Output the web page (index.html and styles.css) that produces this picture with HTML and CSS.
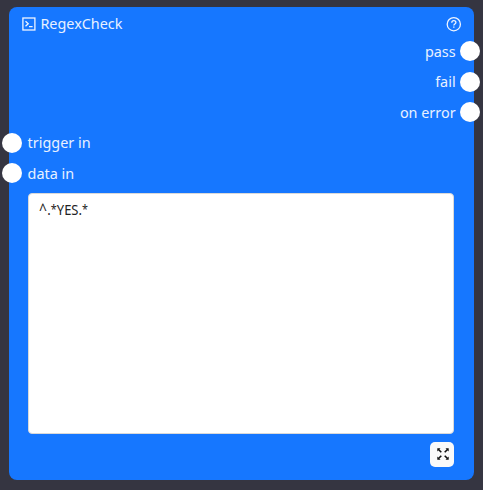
FILE: index.html
```
<!DOCTYPE html>
<html lang="en">
<head>
<meta charset="utf-8">
<title>RegexCheck</title>
<link rel="stylesheet" href="styles.css">
</head>
<body>
<section class="node">
  <header class="head">
    <svg class="icon" viewBox="0 0 14 14"><rect x="0.9" y="1" width="12" height="12"/><path d="M3.5 4.3 6.2 6.8 3.5 9.3M7 9.6h3.6"/></svg>
    <h1 class="title">RegexCheck</h1>
    <svg class="icon help" viewBox="0 0 16 16"><circle cx="7.8" cy="8.2" r="6.6"/><path d="M5.8 6.7C5.8 5.4 6.6 4.7 7.8 4.7s2.1.8 2.1 1.9C9.9 7.9 7.8 8 7.8 9.4"/><path d="M7.8 10.5v1.3"/></svg>
  </header>
  <div class="port out"><span class="label">pass</span><i class="dot"></i></div>
  <div class="port out"><span>fail</span><i class="dot"></i></div>
  <div class="port out"><span class="label">on error</span><i class="dot"></i></div>
  <div class="port in"><i class="dot"></i><span>trigger in</span></div>
  <div class="port in"><i class="dot"></i><span class="label">data in</span></div>
  <div class="editor"><span class="code"><span class="caret">^</span>.<span class="star">*</span>YES.<span class="star">*</span></span></div>
  <button class="expand" aria-label="Expand">
    <svg viewBox="0 0 12 12"><path class="stem" d="M1.5 1.5 4.3 4.3M10.5 1.5 7.7 4.3M1.5 10.5 4.3 7.7M10.5 10.5 7.7 7.7"/><path d="M.3.3h3.2L.3 3.5zM11.7.3v3.2L8.5.3zM.3 11.7V8.5l3.2 3.2zM11.7 11.7H8.5l3.2-3.2z"/></svg>
  </button>
</section>
</body>
</html>
```
FILE: styles.css
```
* { box-sizing: border-box; }
body {
  margin: 0;
  padding: 7px 9px 10px;
  height: 490px;
  background: #353541;
  font-family: "Noto Sans", sans-serif;
  font-size: 14.4px;
  color: #e8f1ff;
}
.node {
  display: flex;
  flex-direction: column;
  width: 465px;
  height: 473px;
  border-radius: 8px;
  background: #1677ff;
}
.head {
  display: flex;
  align-items: center;
  height: 29px;
  padding: 5px 12px 0 13px;
}
.icon {
  width: 14px;
  height: 14px;
  fill: none;
  stroke: #f0f5ff;
  stroke-width: 1.3;
}
.help { width: 16px; height: 16px; margin-left: auto; }
.title { margin: 0 0 0 4.4px; font-size: 14.4px; font-weight: 400; line-height: 20px; }
.port {
  display: flex;
  align-items: center;
  gap: 4.4px;
  height: 30.5px;
  line-height: 20px;
}
.out { justify-content: flex-end; margin-right: -6px; }
.in { margin-left: -7px; gap: 5.6px; }
.label { padding-top: 2px; }
.dot { width: 20px; height: 20px; border-radius: 50%; background: #fff; }
.editor {
  width: 426px;
  height: 241px;
  margin: 4.5px 0 0 19px;
  padding: 5px 10px;
  border: 1px solid #d9d9d9;
  border-radius: 4px;
  background: #fff;
  color: #222;
}
.code {
  display: inline-block;
  font-size: 15px;
  line-height: 21px;
  transform: scaleX(.865);
  transform-origin: left;
}
.caret { font-size: 16px; letter-spacing: .5px; }
.star { font-size: 12.5px; vertical-align: 1px; line-height: 1; }
.expand {
  display: flex;
  align-items: center;
  justify-content: center;
  align-self: flex-end;
  width: 24px;
  height: 25px;
  margin: 8px 20px 0 0;
  padding: 0 0 1px 1px;
  border: 0;
  border-radius: 5px;
  background: #fafafa;
}
.expand svg { width: 12px; height: 12px; fill: #111; }
.stem { stroke: #111; stroke-width: 1.6; }
```
